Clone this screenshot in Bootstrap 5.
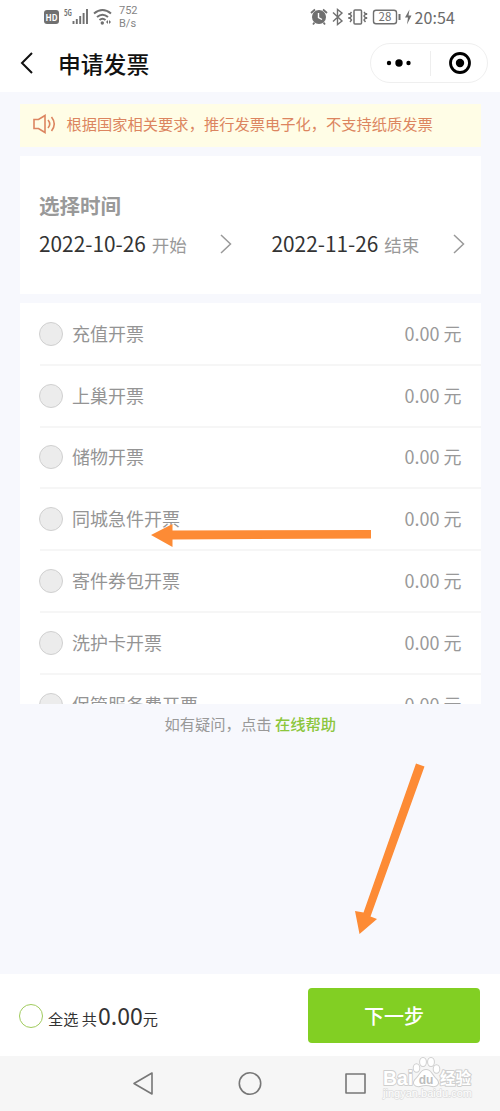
<!DOCTYPE html>
<html lang="zh-CN">
<head>
<meta charset="utf-8">
<meta name="viewport" content="width=device-width, initial-scale=1">
<title>申请发票</title>
<link href="https://cdn.jsdelivr.net/npm/bootstrap@5.3.0/dist/css/bootstrap.min.css" rel="stylesheet">
<style>
body{font-family:"Noto Sans CJK SC","Noto Sans",sans-serif;background:#f7f8fd;color:#222;line-height:1}
svg{display:block;flex:none}
.screen{width:500px;height:1111px;white-space:nowrap}
.statusbar{height:34px;padding:0 45px 0 44px;color:#6b6b6b}
.rate{font:11px/13px Roboto,sans-serif;color:#858585}
.clock{font-size:16px;letter-spacing:.1px}
.titlebar{height:58px;padding:0 12px 0 20px}
.page-title{font-size:22.8px;font-weight:500;color:#111}
.capsule{width:118px;height:40px;border:1px solid #efefef}
.capsule-line{width:1px;height:25px;background:#eee}
.notice{height:43px;margin-top:12px;padding:0 0 3px 13px;background:#fffde6;color:#dc8560;font-size:15.27px}
.date-card{height:138px;margin-top:9px;padding:38px 16px 0 19px}
.section-name{font-size:20.5px;line-height:22px;color:#999}
.date-line{margin-top:16px;font-size:20.8px;line-height:22px;color:#333}
.date-line small{font-size:17.5px;color:#999;margin-left:6px}
.date-value{width:181px}
.bill-list{height:401px;margin-top:9px;padding:1px 0 0 20px;overflow:hidden}
.bill-row{height:61.8px;padding:0 19px 2px 0;border-bottom:2px solid #f6f6f6;font-size:18px;color:#949494}
.pick{width:24px;height:24px;border:1.5px solid #d0d0d0;background:#ececec;margin:2px 9px 0 -1px}
.sum{color:#999}
.sum span{margin-left:4px}
.help{margin-top:10px;font-size:15.3px;line-height:18px;color:#999}
.help a{color:#8cc63c;font-weight:500;text-decoration:none}
.paybar{height:82px;padding:1px 20px 0 19px}
.pick-all{width:24px;height:24px;border:1.5px solid #a0cb5d;margin-right:5px}
.total{font-size:15.2px;color:#333}
.total b{font-size:23px;font-weight:400;margin-left:1px}
.next{width:172px;height:55px;background:#82cf23;border-radius:4px;color:#fff;font-size:20px;font-weight:500}
.next:hover{background:#78c21e;color:#fff}
.sysnav{height:55px;background:#f6f6f6}
.pointer-layer{position:absolute;left:0;top:0;pointer-events:none}
</style>
</head>
<body>
<div class="screen position-relative overflow-hidden d-flex flex-column">
  <header class="bg-white">
    <div class="statusbar d-flex align-items-center justify-content-between">
      <div class="d-flex align-items-center">
        <svg width="68" height="20" viewBox="44 7 68 20">
          <rect x="44" y="10" width="15" height="14" rx="3" fill="#707070"/>
          <text x="51.5" y="21" text-anchor="middle" font-size="9" font-weight="700" fill="#fff" textLength="12" lengthAdjust="spacingAndGlyphs">HD</text>
          <text x="64" y="15.500" font-size="8.500" font-weight="700" fill="#707070" textLength="8" lengthAdjust="spacingAndGlyphs">5G</text>
          <path d="M73.500 21v3M76.800 19v5M80.200 16v8M83.600 13v11M87 9v15" stroke="#707070" stroke-width="1.900"/>
          <path d="M94 13.500Q102.500 6.500 111 13.500M97 17Q102.500 12.500 108 17M99.500 20q3-2.500 6 0" fill="none" stroke="#707070" stroke-width="2"/>
          <circle cx="102.300" cy="23" r="1.700" fill="#707070"/>
          <path d="M108 20l-2 2 2 2zM109 20l2 2-2 2z" fill="#707070"/>
        </svg>
        <div class="rate" style="margin-left:7px">752<br>B/s</div>
      </div>
      <div class="d-flex align-items-center">
        <svg width="105" height="20" viewBox="310 7 105 20" fill="none" stroke="#707070" stroke-width="1.400">
          <circle cx="319" cy="17" r="6.300" fill="#707070"/>
          <path d="M311 13l4-3.500M327 13l-4-3.500M314.500 22.500l-1.500 2M323.500 22.500l1.500 2" stroke-width="1.800"/>
          <path d="M318.500 13v4.500l3.500 2" stroke="#fff"/>
          <path d="M333 12.500l9 8.500-4.500 3.500V9.500l4.500 3.500-9 8.500"/>
          <rect x="354" y="10" width="7.500" height="14" rx="1" stroke-width="1.500"/>
          <path d="M351.500 12l-1.500 2 1.500 2-1.500 2 1.500 2-1.500 2M364 12l1.500 2-1.500 2 1.500 2-1.500 2 1.500 2M349 13v2m0 2v2M366.500 13v2m0 2v2"/>
          <rect x="373.500" y="10.200" width="23" height="13.600" rx="2.500"/>
          <path d="M399.500 14v6" stroke-width="2"/>
          <text x="385" y="21" text-anchor="middle" font-size="11.500" fill="#707070" stroke="none">28</text>
          <path d="M409.500 9.500l-4.500 8h3l-1 7 4.500-9h-3z" fill="#707070" stroke="none"/>
        </svg>
        <span class="clock">20:54</span>
      </div>
    </div>
    <div class="titlebar d-flex align-items-center">
      <svg width="14" height="22" viewBox="0 0 14 22" fill="none" stroke="#111" stroke-width="2"><path d="M12 1L2 11l10 10"/></svg>
      <span class="page-title" style="margin-left:24px;padding-top:3px">申请发票</span>
      <div class="capsule rounded-pill ms-auto d-flex align-items-center justify-content-between">
        <svg width="58" height="38" viewBox="0 0 58 38"><circle cx="18" cy="19" r="2.200"/><circle cx="28" cy="19" r="3.700"/><circle cx="37.500" cy="19" r="2.200"/></svg>
        <span class="capsule-line"></span>
        <svg width="56" height="38" viewBox="0 0 56 38"><circle cx="29" cy="19" r="9.500" fill="none" stroke="#000" stroke-width="2.800"/><circle cx="29" cy="19" r="4.200"/></svg>
      </div>
    </div>
  </header>

  <main class="flex-grow-1" style="padding:0 19.500px 0 20px">
    <div class="notice d-flex align-items-center">
      <svg width="24" height="20" viewBox="0 0 24 20" fill="none" stroke="#dc8560" stroke-width="1.600"><path d="M1 5.500h4.500L12 1.500v17l-6.500-4H1zM15 6q3.500 4 0 8M18.500 3q5.500 7 0 14"/></svg>
      <span style="margin-left:9.500px">根据国家相关要求，推行发票电子化，不支持纸质发票</span>
    </div>
    <section class="date-card bg-white">
      <div class="section-name fw-bold">选择时间</div>
      <div class="date-line d-flex justify-content-between">
        <div class="d-flex align-items-center"><div class="date-value">2022-10-26<small>开始</small></div><svg width="12" height="20" viewBox="0 0 12 20" fill="none" stroke="#999" stroke-width="1.500"><path d="M1 1l9.500 9L1 19"/></svg></div>
        <div class="d-flex align-items-center"><div class="date-value">2022-11-26<small>结束</small></div><svg width="12" height="20" viewBox="0 0 12 20" fill="none" stroke="#999" stroke-width="1.500"><path d="M1 1l9.500 9L1 19"/></svg></div>
      </div>
    </section>
    <section class="bill-list bg-white">
      <div class="bill-row d-flex align-items-center"><span class="pick rounded-circle"></span>充值开票<div class="sum ms-auto">0.00<span>元</span></div></div>
      <div class="bill-row d-flex align-items-center"><span class="pick rounded-circle"></span>上巢开票<div class="sum ms-auto">0.00<span>元</span></div></div>
      <div class="bill-row d-flex align-items-center"><span class="pick rounded-circle"></span>储物开票<div class="sum ms-auto">0.00<span>元</span></div></div>
      <div class="bill-row d-flex align-items-center"><span class="pick rounded-circle"></span>同城急件开票<div class="sum ms-auto">0.00<span>元</span></div></div>
      <div class="bill-row d-flex align-items-center"><span class="pick rounded-circle"></span>寄件券包开票<div class="sum ms-auto">0.00<span>元</span></div></div>
      <div class="bill-row d-flex align-items-center"><span class="pick rounded-circle"></span>洗护卡开票<div class="sum ms-auto">0.00<span>元</span></div></div>
      <div class="bill-row d-flex align-items-center"><span class="pick rounded-circle"></span>保管服务费开票<div class="sum ms-auto">0.00<span>元</span></div></div>
    </section>
    <div class="help text-center">如有疑问，点击 <a href="#">在线帮助</a></div>
  </main>

  <footer>
    <div class="paybar bg-white d-flex align-items-center">
      <span class="pick-all rounded-circle"></span>
      <div class="total">全选 共<b>0.00</b>元</div>
      <button class="btn next ms-auto border-0 p-0" type="button">下一步</button>
    </div>
    <nav class="sysnav">
      <svg width="500" height="55" viewBox="0 1056 500 55">
        <g fill="none" stroke="#777" stroke-width="1.600" stroke-linejoin="round">
          <path d="M134 1083.500L152 1073v21z"/><circle cx="250" cy="1083.500" r="10.700"/><rect x="346" y="1074" width="19" height="19"/>
        </g>
      </svg>
    </nav>
  </footer>

  <svg class="pointer-layer" width="500" height="1111" viewBox="0 0 500 1111">
    <g fill="#fd8b35">
      <path d="M151 535L172.500 524v6.500L371 530v8.500L172.500 539.500v7.500z"/>
      <path d="M416 763.500L424.500 766.500 370.500 916.500 377 919 359.500 934 355 911 363.500 912.500z"/>
    </g>
    <g font-family="Liberation Sans, sans-serif" fill="#fff" stroke="#cfcfcf" stroke-width="2" paint-order="stroke" stroke-linejoin="round">
      <text x="383" y="1085" font-size="20.500" font-weight="700" textLength="30" lengthAdjust="spacingAndGlyphs">Bai</text>
      <ellipse cx="416.500" cy="1068" rx="2.800" ry="3.800"/><ellipse cx="423" cy="1062" rx="2.900" ry="4"/><ellipse cx="431" cy="1062" rx="2.900" ry="4"/><ellipse cx="436.500" cy="1069" rx="2.800" ry="3.800"/>
      <path d="M426 1070c5 0 6 5 9 8 6 5 2 9-3 8q-6-2-12 0c-5 1-9-3-3-8 3-3 4-8 9-8z"/>
      <text x="440" y="1084" font-size="15.500" font-weight="700" font-family="Noto Sans CJK SC, sans-serif" textLength="31" lengthAdjust="spacingAndGlyphs">经验</text>
      <text x="383" y="1097" font-size="11" stroke="#ddd" stroke-width="1.400" textLength="89" lengthAdjust="spacingAndGlyphs">jingyan.baidu.com</text>
    </g>
    <text x="426" y="1084" text-anchor="middle" font-family="Liberation Sans, sans-serif" font-size="12" font-weight="700" fill="#bdbdbd">du</text>
  </svg>
</div>
<script src="https://cdn.jsdelivr.net/npm/bootstrap@5.3.0/dist/js/bootstrap.bundle.min.js"></script>
</body>
</html>
